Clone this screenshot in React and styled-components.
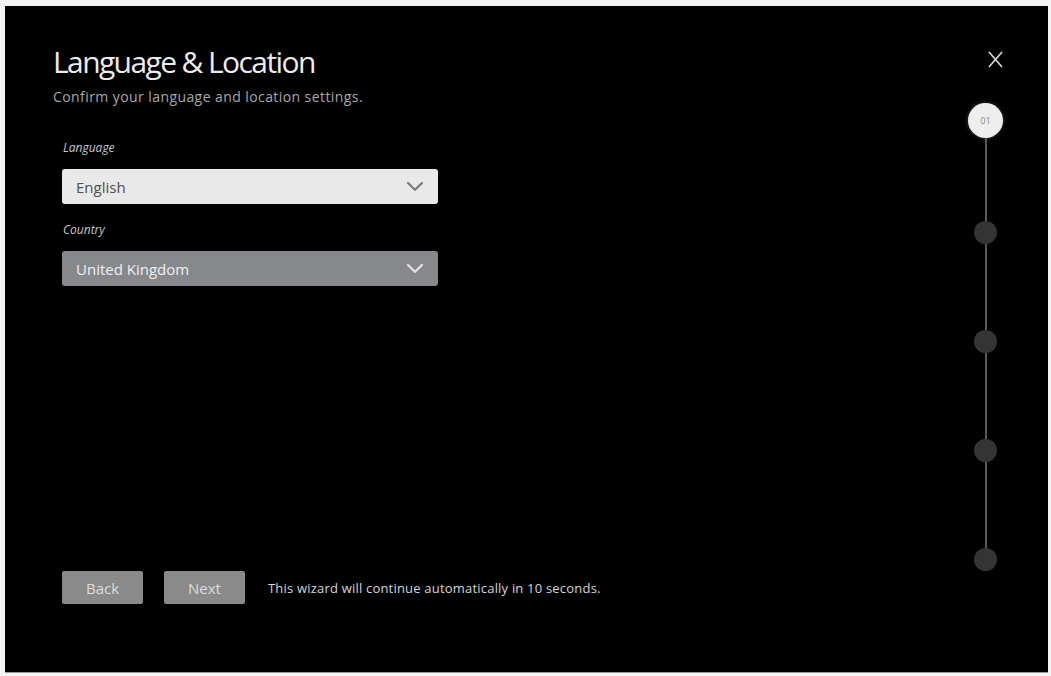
import React from "react";
import styled, { createGlobalStyle } from "styled-components";

const GlobalStyle = createGlobalStyle`
  html, body {
    margin: 0;
    padding: 0;
    background: #f4f4f4;
  }
  body {
    font-family: "Open Sans", "Noto Sans", sans-serif;
  }
`;

const steps = ["01", "02", "03", "04", "05"];

function Chevron({ color }) {
  return (
    <svg width="18" height="11" viewBox="0 0 18 11" fill="none">
      <path
        d="M2 2 L9 8.8 L16 2"
        stroke={color}
        strokeWidth="2.2"
        strokeLinecap="round"
        strokeLinejoin="round"
      />
    </svg>
  );
}

function Select({ label, value, variant }) {
  return (
    <Field>
      <Label>{label}</Label>
      <Box variant={variant}>
        <span>{value}</span>
        <Chevron color={variant === "light" ? "#7a7a7a" : "#e4e4e4"} />
      </Box>
    </Field>
  );
}

export default function App() {
  return (
    <>
      <GlobalStyle />
      <Panel>
        <Main>
          <Title>Language &amp; Location</Title>
          <Subtitle>Confirm your language and location settings.</Subtitle>
          <Form>
            <Select label="Language" value="English" variant="light" />
            <Select label="Country" value="United Kingdom" variant="dark" />
          </Form>
          <Footer>
            <Button>Back</Button>
            <Button>Next</Button>
            <Notice>This wizard will continue automatically in 10 seconds.</Notice>
          </Footer>
        </Main>
        <Side>
          <Close aria-label="Close">
            <svg width="16" height="19" viewBox="0 0 16 19">
              <path
                d="M1.5 2 L14.5 17 M14.5 2 L1.5 17"
                stroke="#d8d8d8"
                strokeWidth="1.8"
                strokeLinecap="round"
              />
            </svg>
          </Close>
          <Stepper>
            {steps.map((s, i) => (
              <React.Fragment key={s}>
                {i > 0 && <Segment first={i === 1} />}
                {i === 0 ? <Current>{s}</Current> : <Dot />}
              </React.Fragment>
            ))}
          </Stepper>
        </Side>
      </Panel>
    </>
  );
}

const Panel = styled.div`
  margin: 6px 3px 0 5px;
  height: 666px;
  background: #000;
  display: flex;
  border-bottom: 1px solid #9a9a9a;
`;

const Main = styled.div`
  flex: 1;
  display: flex;
  flex-direction: column;
  padding: 38px 0 68px 48px;
`;

const Title = styled.h1`
  margin: 0;
  font-size: 30px;
  font-weight: 400;
  line-height: 36px;
  letter-spacing: -1.6px;
  color: #ececec;
`;

const Subtitle = styled.p`
  margin: 8px 0 0;
  font-size: 14px;
  line-height: 18px;
  letter-spacing: 0.42px;
  color: #a8a8a8;
`;

const Form = styled.div`
  display: flex;
  flex-direction: column;
  gap: 18px;
  margin-top: 34px;
  padding-left: 9px;
  width: 376px;
`;

const Field = styled.div`
  display: flex;
  flex-direction: column;
  gap: 14px;
`;

const Label = styled.div`
  padding-left: 1px;
  font-size: 12px;
  font-style: italic;
  line-height: 15px;
  color: #c8c8c8;
`;

const Box = styled.div`
  height: 35px;
  box-sizing: border-box;
  border-radius: 3px;
  padding: 0 14px 0 14px;
  display: flex;
  align-items: center;
  justify-content: space-between;
  font-size: 15px;
  background: ${({ variant }) => (variant === "light" ? "#e9e9e9" : "#86888c")};
  color: ${({ variant }) => (variant === "light" ? "#505050" : "#f0f0f0")};
`;

const Footer = styled.div`
  margin-top: auto;
  display: flex;
  align-items: center;
  gap: 21px;
  padding-left: 9px;
`;

const Button = styled.button`
  width: 81px;
  height: 33px;
  border: none;
  border-radius: 2px;
  background: #8a8a8a;
  color: #dcdcdc;
  font-family: inherit;
  font-size: 15px;
  padding: 0;
`;

const Notice = styled.span`
  margin-left: 2px;
  font-size: 13px;
  letter-spacing: 0.2px;
  color: #d6d6d6;
`;

const Side = styled.div`
  width: 120px;
  display: flex;
  flex-direction: column;
  align-items: flex-end;
  padding: 44px 45px 0 0;
  box-sizing: border-box;
`;

const Close = styled.div`
  width: 35px;
  display: flex;
  justify-content: center;
  padding-left: 20px;
  box-sizing: border-box;
`;

const Stepper = styled.div`
  margin-top: 34px;
  width: 35px;
  display: flex;
  flex-direction: column;
  align-items: center;
`;

const Current = styled.div`
  width: 35px;
  height: 35px;
  border-radius: 50%;
  background: #eeeeee;
  box-shadow: 0 0 4px rgba(255, 255, 255, 0.25);
  display: flex;
  align-items: center;
  justify-content: center;
  font-size: 9px;
  color: #8a8a8a;
`;

const Segment = styled.div`
  width: 2px;
  height: ${({ first }) => (first ? "83px" : "86px")};
  background: #5a5a5a;
`;

const Dot = styled.div`
  width: 23px;
  height: 23px;
  border-radius: 50%;
  background: #343434;
`;
